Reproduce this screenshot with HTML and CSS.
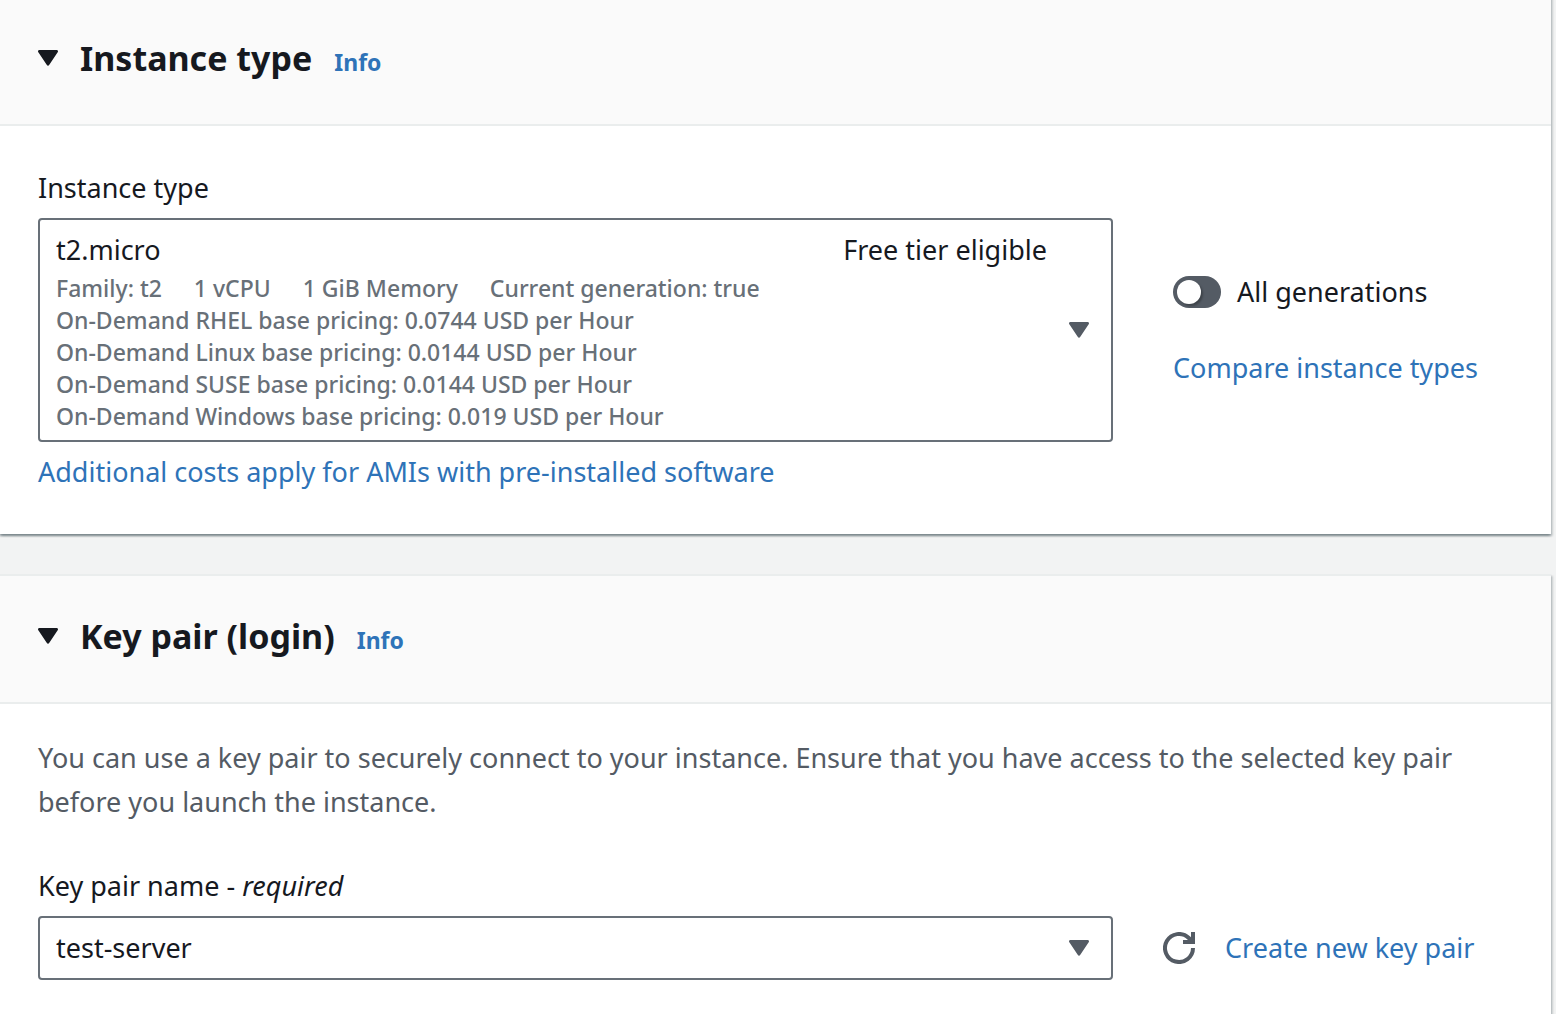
FILE: index.html
```html
<!DOCTYPE html>
<html lang="en">
<head>
<meta charset="utf-8">
<meta name="viewport" content="width=device-width, initial-scale=1">
<title>Launch an instance</title>
<link rel="stylesheet" href="styles.css">
</head>
<body>
<main class="page">
  <section class="card">
    <header class="card-header">
      <button class="expander" type="button" aria-expanded="true">
        <svg class="caret" viewBox="0 0 20 16" aria-hidden="true"><path d="M1.500 0h17c1.400 0 2 1.500 1 2.600L11.300 14.800c-.8 1.200-1.800 1.200-2.600 0L.5 2.600C-.5 1.500.1 0 1.500 0z"/></svg>
        <span class="card-title">Instance type</span>
      </button>
      <a class="info" href="#">Info</a>
    </header>
    <div class="card-body">
      <div class="field">
        <label class="label" for="instance-type">Instance type</label>
        <div class="row">
          <button class="control instance-select" id="instance-type" type="button" aria-haspopup="listbox">
            <span class="option">
              <span class="option-head"><span>t2.micro</span><span>Free tier eligible</span></span>
              <span class="option-tags"><span>Family: t2</span><span>1 vCPU</span><span>1 GiB Memory</span><span>Current generation: true</span></span>
              <span class="option-line">On-Demand RHEL base pricing: 0.0744 USD per Hour</span>
              <span class="option-line">On-Demand Linux base pricing: 0.0144 USD per Hour</span>
              <span class="option-line">On-Demand SUSE base pricing: 0.0144 USD per Hour</span>
              <span class="option-line">On-Demand Windows base pricing: 0.019 USD per Hour</span>
            </span>
            <svg class="caret caret-muted" viewBox="0 0 20 16" aria-hidden="true"><path d="M1.500 0h17c1.400 0 2 1.500 1 2.600L11.300 14.800c-.8 1.200-1.800 1.200-2.600 0L.5 2.600C-.5 1.500.1 0 1.500 0z"/></svg>
          </button>
          <div class="side side-stack">
            <label class="toggle"><input class="toggle-input" type="checkbox" role="switch">All generations</label>
            <a class="link" href="#">Compare instance types</a>
          </div>
        </div>
        <a class="link" href="#">Additional costs apply for AMIs with pre-installed software</a>
      </div>
    </div>
  </section>

  <section class="card">
    <header class="card-header">
      <button class="expander" type="button" aria-expanded="true">
        <svg class="caret" viewBox="0 0 20 16" aria-hidden="true"><path d="M1.500 0h17c1.400 0 2 1.500 1 2.600L11.300 14.800c-.8 1.200-1.800 1.200-2.600 0L.5 2.600C-.5 1.500.1 0 1.500 0z"/></svg>
        <span class="card-title">Key pair (login)</span>
      </button>
      <a class="info" href="#">Info</a>
    </header>
    <div class="card-body card-body-text">
      <p class="description">You can use a key pair to securely connect to your instance. Ensure that you have access to the selected key pair before you launch the instance.</p>
      <div class="field">
        <label class="label" for="key-pair">Key pair name - <em>required</em></label>
        <div class="row">
          <div class="select-wrap">
            <select class="control key-select" id="key-pair"><option>test-server</option></select>
            <svg class="caret caret-muted caret-over" viewBox="0 0 20 16" aria-hidden="true"><path d="M1.500 0h17c1.400 0 2 1.500 1 2.600L11.300 14.800c-.8 1.200-1.800 1.200-2.600 0L.5 2.600C-.5 1.500.1 0 1.500 0z"/></svg>
          </div>
          <div class="side side-inline">
            <button class="refresh" type="button" aria-label="Refresh key pairs">
              <svg class="refresh-icon" viewBox="0 0 32 32" aria-hidden="true"><path d="M30 16a14 14 0 1 1-4.200-10L30 10M30 0v10H20"/></svg>
            </button>
            <a class="link" href="#">Create new key pair</a>
          </div>
        </div>
      </div>
    </div>
  </section>
</main>
</body>
</html>
```
FILE: styles.css
```css
* {
  box-sizing: border-box;
}

body {
  margin: 0;
  background: #f2f3f3;
  color: #16191f;
  font-family: "Noto Sans", "Open Sans", sans-serif;
  font-size: 27px;
  font-weight: 400;
  line-height: 44px;
}

button,
select {
  font: inherit;
  color: inherit;
}

.page {
  display: flex;
  flex-direction: column;
  gap: 40px;
  margin: -4px 5px 0 0;
}

.card {
  background: #fff;
  border-top: 2px solid #eaeded;
  box-shadow: 0 2px 2px 0 rgba(0, 28, 36, 0.3), 2px 2px 2px 0 rgba(0, 28, 36, 0.15), -2px 2px 2px 0 rgba(0, 28, 36, 0.15);
}

.card-header {
  display: flex;
  align-items: baseline;
  gap: 22px;
  padding: 38px 38px 44px;
  border-bottom: 2px solid #eaeded;
  background: #fafafa;
}

.expander {
  display: flex;
  align-items: center;
  gap: 22px;
  padding: 0;
  border: 0;
  background: none;
}

.card-title {
  align-self: baseline;
  font-size: 34px;
  font-weight: 700;
}

.info {
  color: #2e73b8;
  font-size: 23px;
  font-weight: 700;
  line-height: 32px;
  text-decoration: none;
}

.caret {
  width: 20px;
  height: 16px;
  flex: none;
  fill: #16191f;
}

.caret-muted {
  fill: #545b64;
}

.card-body {
  padding: 40px 38px;
}

.card-body-text {
  padding-top: 32px;
}

.description {
  margin: 0 0 40px;
  color: #545b64;
}

.field {
  display: flex;
  flex-direction: column;
  align-items: flex-start;
  gap: 8px;
}

.row {
  display: grid;
  grid-template-columns: 1fr 360px;
  align-items: center;
  gap: 40px;
  width: 100%;
}

.control {
  width: 100%;
  border: 2px solid #687078;
  border-radius: 4px;
  background: #fff;
}

.instance-select {
  display: flex;
  align-items: center;
  gap: 22px;
  padding: 8px 22px 8px 16px;
  text-align: left;
}

.option {
  display: flex;
  flex: 1;
  flex-direction: column;
}

.option-head {
  display: flex;
  justify-content: space-between;
}

.option-tags,
.option-line {
  color: #687078;
  font-size: 23px;
  font-weight: 500;
  line-height: 32px;
}

.option-tags {
  display: flex;
  gap: 32px;
}

.select-wrap {
  position: relative;
}

.key-select {
  display: block;
  height: 64px;
  padding: 0 64px 0 16px;
  appearance: none;
}

.caret-over {
  position: absolute;
  top: 24px;
  right: 24px;
  pointer-events: none;
}

.side {
  display: flex;
}

.side-stack {
  flex-direction: column;
  gap: 32px;
  padding-left: 20px;
}

.side-inline {
  align-items: center;
  gap: 20px;
}

.link {
  color: #2e73b8;
  text-decoration: none;
}

.toggle {
  display: flex;
  align-items: center;
  gap: 16px;
}

.toggle-input {
  width: 48px;
  height: 32px;
  margin: 0;
  padding: 4px;
  border-radius: 16px;
  background: #545b64;
  appearance: none;
}

.toggle-input::before {
  content: "";
  display: block;
  width: 24px;
  height: 24px;
  border-radius: 12px;
  background: #fff;
  box-shadow: 2px 2px 2px rgba(0, 0, 0, 0.25);
}

.toggle-input:checked::before {
  margin-left: 16px;
}

.refresh {
  display: flex;
  padding: 10px;
  border: 0;
  background: none;
}

.refresh-icon {
  width: 32px;
  height: 32px;
  fill: none;
  stroke: #545b64;
  stroke-width: 4;
}
```
